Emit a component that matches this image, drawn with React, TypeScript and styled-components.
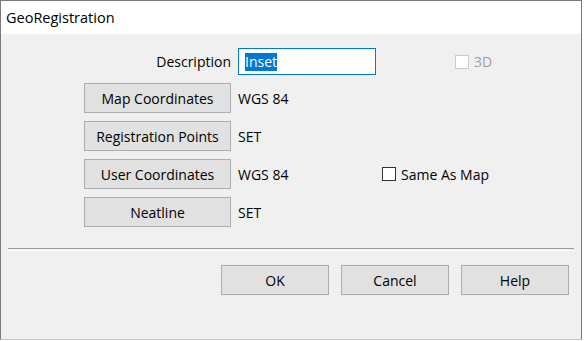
import React from "react";
import styled, { createGlobalStyle } from "styled-components";

const GlobalStyle = createGlobalStyle`
  html, body {
    margin: 0;
    padding: 0;
    background: #ffffff;
  }
  body {
    font-family: "Open Sans", "Noto Sans", sans-serif;
  }
`;

const Window = styled.div`
  width: 580px;
  height: 338px;
  border: 1px solid #7a7a7a;
  border-bottom-color: #c4c4c4;
  background: #f0f0f0;
  display: flex;
  flex-direction: column;
`;

const TitleBar = styled.div`
  height: 33px;
  background: #ffffff;
  display: flex;
  align-items: center;
  padding-left: 5px;
  font-size: 14.5px;
  color: #000;
`;

const Body = styled.div`
  flex: 1;
  display: flex;
  flex-direction: column;
  padding: 14px 0 0 0;
`;

const Form = styled.div`
  display: grid;
  grid-template-columns: 147px 137px auto;
  column-gap: 7px;
  row-gap: 8px;
  padding-left: 83px;
  font-size: 14px;
  color: #000;
`;

const Label = styled.div`
  display: flex;
  align-items: center;
  justify-content: flex-end;
  height: 27px;
`;

const TextBox = styled.div`
  box-sizing: border-box;
  width: 138px;
  height: 27px;
  border: 1px solid #0078d7;
  background: #fff;
  display: flex;
  align-items: center;
  padding-left: 6px;
`;

const Selected = styled.span`
  background: #0078d7;
  color: #fff;
  line-height: 18px;
`;

const Cell = styled.div<{ $offset?: number }>`
  display: flex;
  align-items: center;
  margin-left: ${(p) => p.$offset ?? 0}px;
`;

const Button = styled.button<{ $w?: number }>`
  box-sizing: border-box;
  width: ${(p) => (p.$w ? `${p.$w}px` : "100%")};
  height: 30px;
  margin: 0;
  padding: 0;
  background: #e1e1e1;
  border: 1px solid #adadad;
  font-family: "Open Sans", "Noto Sans", sans-serif;
  font-size: 14px;
  color: #000;
`;

const Value = styled.div`
  display: flex;
  align-items: center;
  height: 30px;
`;

const Check = styled.span<{ $disabled?: boolean }>`
  box-sizing: border-box;
  width: 14px;
  height: 14px;
  background: #fff;
  border: 1px solid ${(p) => (p.$disabled ? "#cccccc" : "#333333")};
  margin-right: 5px;
`;

const CheckText = styled.span<{ $disabled?: boolean }>`
  color: ${(p) => (p.$disabled ? "#a0a0a0" : "#000")};
`;

const Separator = styled.div`
  margin: 21px 7px 0 7px;
  height: 1px;
  border-top: 1px solid #a0a0a0;
  border-bottom: 1px solid #ffffff;
`;

const Footer = styled.div`
  display: flex;
  justify-content: flex-end;
  gap: 12px;
  padding: 14px 12px 0 0;
`;

const rows = [
  { button: "Map Coordinates", value: "WGS 84" },
  { button: "Registration Points", value: "SET" },
  { button: "User Coordinates", value: "WGS 84", same: true },
  { button: "Neatline", value: "SET" },
];

export default function App() {
  return (
    <>
      <GlobalStyle />
      <Window>
        <TitleBar>GeoRegistration</TitleBar>
        <Body>
          <Form>
            <Label>Description</Label>
            <TextBox>
              <Selected>Inset</Selected>
            </TextBox>
            <Cell $offset={73}>
              <Check $disabled />
              <CheckText $disabled>3D</CheckText>
            </Cell>
            {rows.map((r) => (
              <React.Fragment key={r.button}>
                <Button>{r.button}</Button>
                <Value>{r.value}</Value>
                <Cell>
                  {r.same && (
                    <>
                      <Check />
                      <CheckText>Same As Map</CheckText>
                    </>
                  )}
                </Cell>
              </React.Fragment>
            ))}
          </Form>
          <Separator />
          <Footer>
            <Button $w={108}>OK</Button>
            <Button $w={108}>Cancel</Button>
            <Button $w={108}>Help</Button>
          </Footer>
        </Body>
      </Window>
    </>
  );
}
